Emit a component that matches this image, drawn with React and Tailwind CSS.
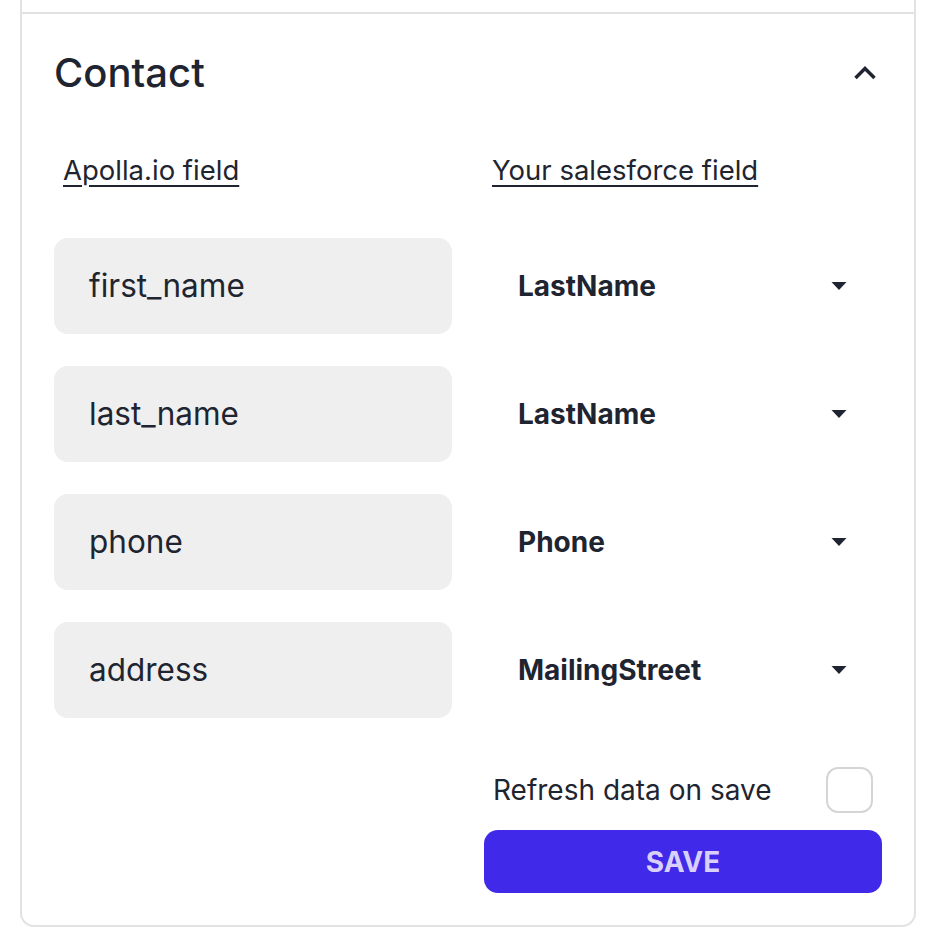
import React, { useState } from 'react';

const mappings = [
  { apollo: 'first_name', salesforce: 'LastName' },
  { apollo: 'last_name', salesforce: 'LastName' },
  { apollo: 'phone', salesforce: 'Phone' },
  { apollo: 'address', salesforce: 'MailingStreet' },
];

const Caret = () => (
  <svg width="16" height="8" viewBox="0 0 16 8" className="shrink-0">
    <path d="M0.5 0h15L8 8z" fill="#1f2530" />
  </svg>
);

const App = () => {
  const [open, setOpen] = useState(true);
  const [refresh, setRefresh] = useState(false);

  return (
    <div className="min-h-screen bg-white text-[#1f2530]" style={{ fontFamily: 'Inter, "Noto Sans", sans-serif' }}>
      <div className="ml-5 w-[896px] border-x-2 border-b-2 border-[#e2e2e2] rounded-b-[14px]">
        {/* previous accordion item, cut off above */}
        <div className="h-3" />

        <div className="border-t-2 border-[#e2e2e2] px-8 pt-[39px] pb-8">
          <div className="flex items-center justify-between">
            <h2 className="text-[40px] leading-[40px] font-medium">Contact</h2>
            <button onClick={() => setOpen(!open)} className="mr-[5px] p-0">
              <svg width="24" height="16" viewBox="0 0 24 16">
                <polyline points="2.5,13 12,3.5 21.5,13" fill="none" stroke="#1f2530" strokeWidth="3.5" />
              </svg>
            </button>
          </div>

          {open && (
            <>
              <div className="grid grid-cols-2 gap-x-8 mt-[61px]">
                <span className="pl-[9px] text-[27.5px] leading-8 underline underline-offset-[5px] decoration-2">Apolla.io field</span>
                <span className="pl-2 text-[27.5px] leading-8 underline underline-offset-[5px] decoration-2">Your salesforce field</span>
              </div>

              <div className="flex flex-col gap-8 mt-[52px]">
                {mappings.map((m, index) => (
                  <div key={index} className="grid grid-cols-2 gap-x-8">
                    <div className="h-24 rounded-[14px] bg-[#efefef] flex items-center px-[35px] text-[31.5px]">
                      {m.apollo}
                    </div>
                    <div className="h-24 flex items-center justify-between pl-[34px] pr-[35px] cursor-pointer">
                      <span className="text-[28px] font-bold">{m.salesforce}</span>
                      <Caret />
                    </div>
                  </div>
                ))}
              </div>

              <div className="grid grid-cols-2 gap-x-8 mt-[49px]">
                <div />
                <div className="flex flex-col">
                  <label className="flex items-center justify-between pl-[9px] pr-[9px]">
                    <span className="text-[28px]">Refresh data on save</span>
                    <input
                      type="checkbox"
                      checked={refresh}
                      onChange={() => setRefresh(!refresh)}
                      className="appearance-none w-[47px] h-[46px] rounded-[12px] border-2 border-[#d5d5d8] bg-white checked:bg-[#4029e8]"
                    />
                  </label>
                  <button className="mt-[17px] h-[63px] rounded-[14px] bg-[#4029e8] text-[#d8cffc] text-[28px] font-bold">
                    SAVE
                  </button>
                </div>
              </div>
            </>
          )}
        </div>
      </div>
    </div>
  );
};

export default App;
